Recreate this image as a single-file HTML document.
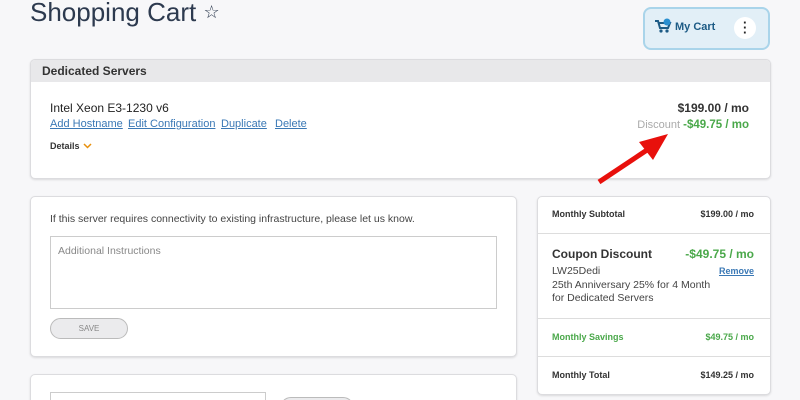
<!DOCTYPE html><html style="overflow:hidden;height:400px"><head><style>
body{margin:0;width:800px;height:400px;overflow:hidden;background:#f7f7f9;font-family:"Liberation Sans",sans-serif;position:relative;color:#333}
.a{position:absolute;white-space:nowrap}
.card{position:absolute;background:#fff;border:1px solid #dcdcdf;border-radius:5px;box-shadow:0 1px 2px rgba(0,0,0,.12)}
a{color:#3a78b5;text-decoration:underline}
</style></head><body>
<div class="a" style="left:30px;top:-3px;font-size:26px;color:#2d3a4f">Shopping Cart <span style="font-size:18px;vertical-align:3px">☆</span></div>
<div style="position:absolute;left:643px;top:7px;width:123px;height:39px;background:#e2eff7;border:2px solid #a9d4ea;border-radius:8px"></div>
<svg class="a" style="left:654px;top:18px" width="18" height="16" viewBox="0 0 18 16"><path d="M1 3h3l2 7h8l2-5H5" fill="none" stroke="#1d5b85" stroke-width="2"/><circle cx="7" cy="13" r="1.6" fill="#1d5b85"/><circle cx="13" cy="13" r="1.6" fill="#1d5b85"/><circle cx="13" cy="4" r="3.5" fill="#2a8fd0"/></svg>
<div class="a" style="left:675px;top:21px;font-size:11px;font-weight:bold;color:#1d5b85">My Cart</div>
<div style="position:absolute;left:734px;top:17px;width:22px;height:22px;border-radius:50%;background:#fff"></div>
<div class="a" style="left:743px;top:20px;font-size:13px;font-weight:bold;line-height:5px;color:#222">·<br>·<br>·</div>

<div class="card" style="left:30px;top:59px;width:739px;height:118px;overflow:hidden">
<div style="height:22px;background:#e8e8ea"></div></div>
<div class="a" style="left:42px;top:64px;font-size:12px;font-weight:bold;color:#333">Dedicated Servers</div>
<div class="a" style="left:50px;top:101px;font-size:12px;color:#222">Intel Xeon E3-1230 v6</div>
<div class="a" style="left:50px;top:118px;font-size:11px"><a>Add Hostname</a></div>
<div class="a" style="left:128px;top:118px;font-size:11px"><a>Edit Configuration</a></div>
<div class="a" style="left:221px;top:118px;font-size:11px"><a>Duplicate</a></div>
<div class="a" style="left:275px;top:118px;font-size:11px"><a>Delete</a></div>
<div class="a" style="left:50px;top:141px;font-size:9px;font-weight:bold">Details</div>
<svg class="a" style="left:83px;top:143px" width="9" height="6"><path d="M1 1l3.5 3.5L8 1" fill="none" stroke="#e8900c" stroke-width="1.5"/></svg>
<div class="a" style="right:51px;top:101px;font-size:12px;font-weight:bold">$199.00 / mo</div>
<div class="a" style="right:51px;top:119px;font-size:11px;color:#aaa">Discount <span style="color:#4aa84a;font-weight:bold;font-size:11.5px">-$49.75 / mo</span></div>
<svg class="a" style="left:595px;top:130px" width="80" height="60"><path d="M4 52L58 16" stroke="#e8100c" stroke-width="5"/><path d="M73 4L44 12L58 30Z" fill="#e8100c"/></svg>

<div class="card" style="left:30px;top:196px;width:485px;height:159px"></div>
<div class="a" style="left:50px;top:213px;font-size:10.5px;color:#444">If this server requires connectivity to existing infrastructure, please let us know.</div>
<div style="position:absolute;left:50px;top:236px;width:445px;height:71px;border:1px solid #ccc;background:#fff"></div>
<div class="a" style="left:58px;top:245px;font-size:10.5px;color:#888">Additional Instructions</div>
<div style="position:absolute;left:50px;top:318px;width:76px;height:19px;border:1px solid #bbb;border-radius:11px;background:#ebebed;font-size:8px;color:#888;text-align:center;line-height:19px">SAVE</div>
<div class="card" style="left:30px;top:374px;width:485px;height:40px"></div>
<div style="position:absolute;left:50px;top:392px;width:214px;height:20px;border:1px solid #ccc;background:#fff"></div>
<div style="position:absolute;left:280px;top:397px;width:72px;height:20px;border:1px solid #bbb;border-radius:11px;background:#ebebed"></div>

<div class="card" style="left:537px;top:196px;width:232px;height:197px"></div>
<div style="position:absolute;left:538px;top:233px;width:232px;border-top:1px solid #ddd"></div>
<div style="position:absolute;left:538px;top:318px;width:232px;border-top:1px solid #ddd"></div>
<div style="position:absolute;left:538px;top:356px;width:232px;border-top:1px solid #ddd"></div>
<div class="a" style="left:552px;top:209px;font-size:9px;font-weight:bold">Monthly Subtotal</div>
<div class="a" style="right:46px;top:209px;font-size:9px;font-weight:bold">$199.00 / mo</div>
<div class="a" style="left:552px;top:247px;font-size:12px;font-weight:bold;color:#333">Coupon Discount</div>
<div class="a" style="right:46px;top:247px;font-size:12px;font-weight:bold;color:#4aa84a">-$49.75 / mo</div>
<div class="a" style="left:552px;top:265px;font-size:10.5px;color:#444;line-height:13.5px">LW25Dedi<br>25th Anniversary 25% for 4 Month<br>for Dedicated Servers</div>
<div class="a" style="right:46px;top:266px;font-size:9px;font-weight:bold"><a>Remove</a></div>
<div class="a" style="left:552px;top:332px;font-size:9px;font-weight:bold;color:#4aa84a">Monthly Savings</div>
<div class="a" style="right:46px;top:332px;font-size:9px;font-weight:bold;color:#4aa84a">$49.75 / mo</div>
<div class="a" style="left:552px;top:370px;font-size:9px;font-weight:bold">Monthly Total</div>
<div class="a" style="right:46px;top:370px;font-size:9px;font-weight:bold">$149.25 / mo</div>
</body></html>
